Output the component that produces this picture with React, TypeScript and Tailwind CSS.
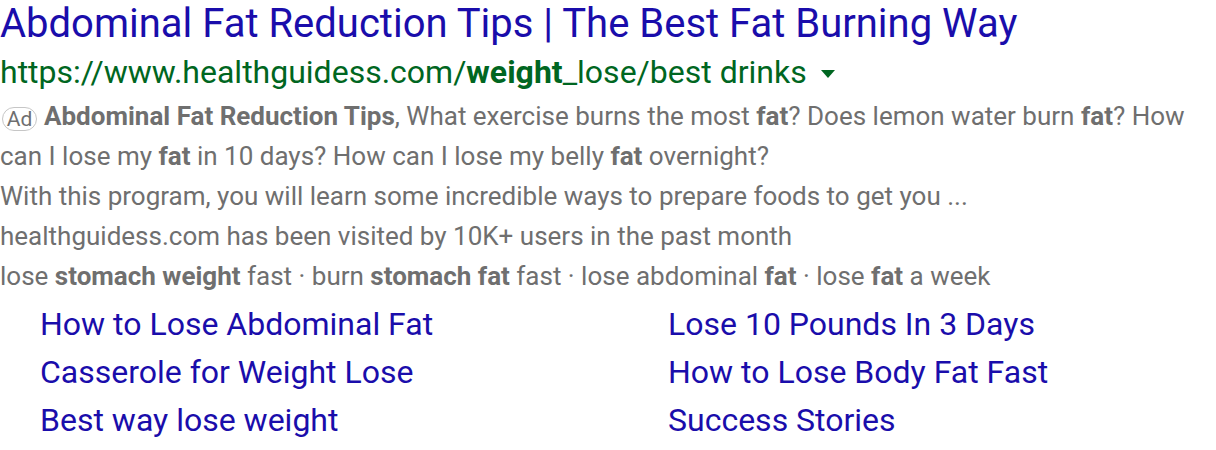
import React from 'react';

const leftLinks = ['How to Lose Abdominal Fat', 'Casserole for Weight Lose', 'Best way lose weight'];
const rightLinks = ['Lose 10 Pounds In 3 Days', 'How to Lose Body Fat Fast', 'Success Stories'];

export default function App() {
  return (
    <div className="w-[1216px] h-[450px] bg-white overflow-hidden font-['Roboto',sans-serif]">
      {/* Headline */}
      <div className="text-[40px] leading-[48px] text-[#1a0dab] whitespace-nowrap">
        Abdominal Fat Reduction Tips | The Best Fat Burning Way
      </div>

      {/* Display URL */}
      <div className="flex items-center text-[32px] leading-[48px] text-[#006621] whitespace-nowrap">
        <span>
          https://www.healthguidess.com/<b className="font-bold">weight</b>_lose/best drinks
        </span>
        <svg className="ml-[14px] mt-1" width="14" height="8" viewBox="0 0 14 8">
          <path d="M0 0 L14 0 L7 8 Z" fill="#006621" />
        </svg>
      </div>

      {/* Description */}
      <div className="text-[26px] leading-[40px] text-[#6f6f6f]">
        <p>
          <span className="inline-block w-[35px] h-[24px] ml-[2px] mr-[7px] align-[-1px] rounded-full border border-[#c6c6c6] text-center text-[21px] leading-[22px] text-[#6f6f6f]">
            Ad
          </span>
          <b className="font-bold">Abdominal Fat Reduction Tips</b>, What exercise burns the most <b className="font-bold">fat</b>? Does lemon water burn <b className="font-bold">fat</b>? How can I lose my <b className="font-bold">fat</b> in 10 days? How can I lose my belly <b className="font-bold">fat</b> overnight?
        </p>
        <p className="whitespace-nowrap">
          With this program, you will learn some incredible ways to prepare foods to get you ...
        </p>
        <p className="whitespace-nowrap">healthguidess.com has been visited by 10K+ users in the past month</p>
        <p className="whitespace-nowrap">
          lose <b className="font-bold">stomach weight</b> fast · burn <b className="font-bold">stomach fat</b> fast · lose abdominal <b className="font-bold">fat</b> · lose <b className="font-bold">fat</b> a week
        </p>
      </div>

      {/* Sitelinks */}
      <div className="grid grid-cols-[628px_1fr] pl-[40px] pt-[4px] text-[32px] leading-[48px] text-[#1a0dab]">
        <div className="flex flex-col">
          {leftLinks.map((l) => (
            <span key={l}>{l}</span>
          ))}
        </div>
        <div className="flex flex-col">
          {rightLinks.map((l) => (
            <span key={l}>{l}</span>
          ))}
        </div>
      </div>
    </div>
  );
}
